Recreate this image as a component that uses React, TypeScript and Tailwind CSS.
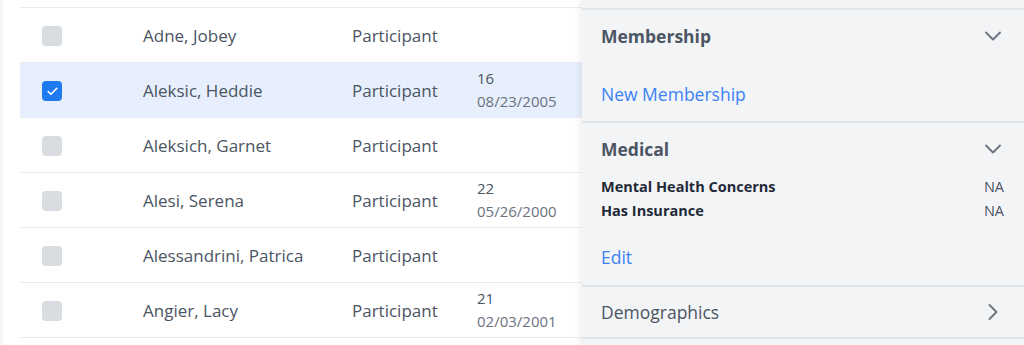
import { ChevronDown, ChevronRight, Check } from "lucide-react";

type Person = { name: string; role: string; age?: string; dob?: string; checked?: boolean };

const people: Person[] = [
  { name: "Adne, Jobey", role: "Participant" },
  { name: "Aleksic, Heddie", role: "Participant", age: "16", dob: "08/23/2005", checked: true },
  { name: "Aleksich, Garnet", role: "Participant" },
  { name: "Alesi, Serena", role: "Participant", age: "22", dob: "05/26/2000" },
  { name: "Alessandrini, Patrica", role: "Participant" },
  { name: "Angier, Lacy", role: "Participant", age: "21", dob: "02/03/2001" },
];

function Row({ p }: { p: Person }) {
  return (
    <div className={`flex items-center h-[55px] pt-[2px] border-b border-[#e8ebef] ${p.checked ? "bg-[#e6effb]" : "bg-white"}`}>
      <div className="w-[123px] pl-[22px] shrink-0">
        {p.checked ? (
          <span className="w-5 h-5 rounded-[4px] bg-[#1f7af2] flex items-center justify-center">
            <Check size={13} strokeWidth={3} className="text-white" />
          </span>
        ) : (
          <span className="block w-5 h-5 rounded-[4px] bg-[#d9dde2]" />
        )}
      </div>
      <div className="w-[209px] shrink-0 text-[17px] text-[#4b5563]">{p.name}</div>
      <div className="w-[125px] shrink-0 text-[17px] text-[#4b5563]">{p.role}</div>
      {p.age && (
        <div className="text-[15px] leading-[23px] -mt-[2px]">
          <p className="text-[#4b5563]">{p.age}</p>
          <p className="text-[#6b7280]">{p.dob}</p>
        </div>
      )}
    </div>
  );
}

function Header({ title, open = true, bold = true, h }: { title: string; open?: boolean; bold?: boolean; h: string }) {
  return (
    <div className={`${h} flex items-center justify-between`}>
      <h3 className={`text-[17.5px] leading-6 text-[#4b5563] ${bold ? "font-bold" : ""}`}>{title}</h3>
      {open ? (
        <ChevronDown size={28} strokeWidth={1.6} className="text-[#6b7280] mr-[-3px]" />
      ) : (
        <ChevronRight size={28} strokeWidth={1.6} className="text-[#6b7280] mr-[-3px]" />
      )}
    </div>
  );
}

export default function App() {
  return (
    <div className="flex w-[1024px] h-[345px] overflow-hidden bg-white" style={{ fontFamily: '"Open Sans", "Noto Sans", sans-serif' }}>
      <div className="w-[3px] shrink-0 bg-[#f4f5f7]" />
      <div className="w-[579px] shrink-0 pl-[17px]">
        <div className="h-[8px] border-b border-[#e8ebef]" />
        {people.map(p => (
          <Row key={p.name} p={p} />
        ))}
      </div>
      <div className="flex-1 bg-[#f3f4f6] shadow-[-3px_0_6px_rgba(0,0,0,0.06)] z-10">
        <div className="h-[10px] border-b-2 border-[#e1e4e9]" />

        <section className="border-b-2 border-[#e1e4e9] pl-[19px] pr-5">
          <Header title="Membership" h="h-[52px]" />
          <div className="pt-5 pb-[15px] text-[17.5px] leading-6 text-[#3b82f6]">New Membership</div>
        </section>

        <section className="border-b-2 border-[#e1e4e9] pl-[19px] pr-5">
          <Header title="Medical" h="h-[52px]" />
          <div className="text-[14.5px] leading-6">
            <div className="flex justify-between">
              <span className="font-bold text-[#1f2937]">Mental Health Concerns</span>
              <span className="text-[#4b5563]">NA</span>
            </div>
            <div className="flex justify-between">
              <span className="font-bold text-[#1f2937]">Has Insurance</span>
              <span className="text-[#4b5563]">NA</span>
            </div>
          </div>
          <div className="pt-[22px] pb-[16px] text-[17.5px] leading-6 text-[#3b82f6]">Edit</div>
        </section>

        <section className="border-b-2 border-[#e1e4e9] pl-[19px] pr-5">
          <Header title="Demographics" open={false} bold={false} h="h-[50px]" />
        </section>
      </div>
    </div>
  );
}
